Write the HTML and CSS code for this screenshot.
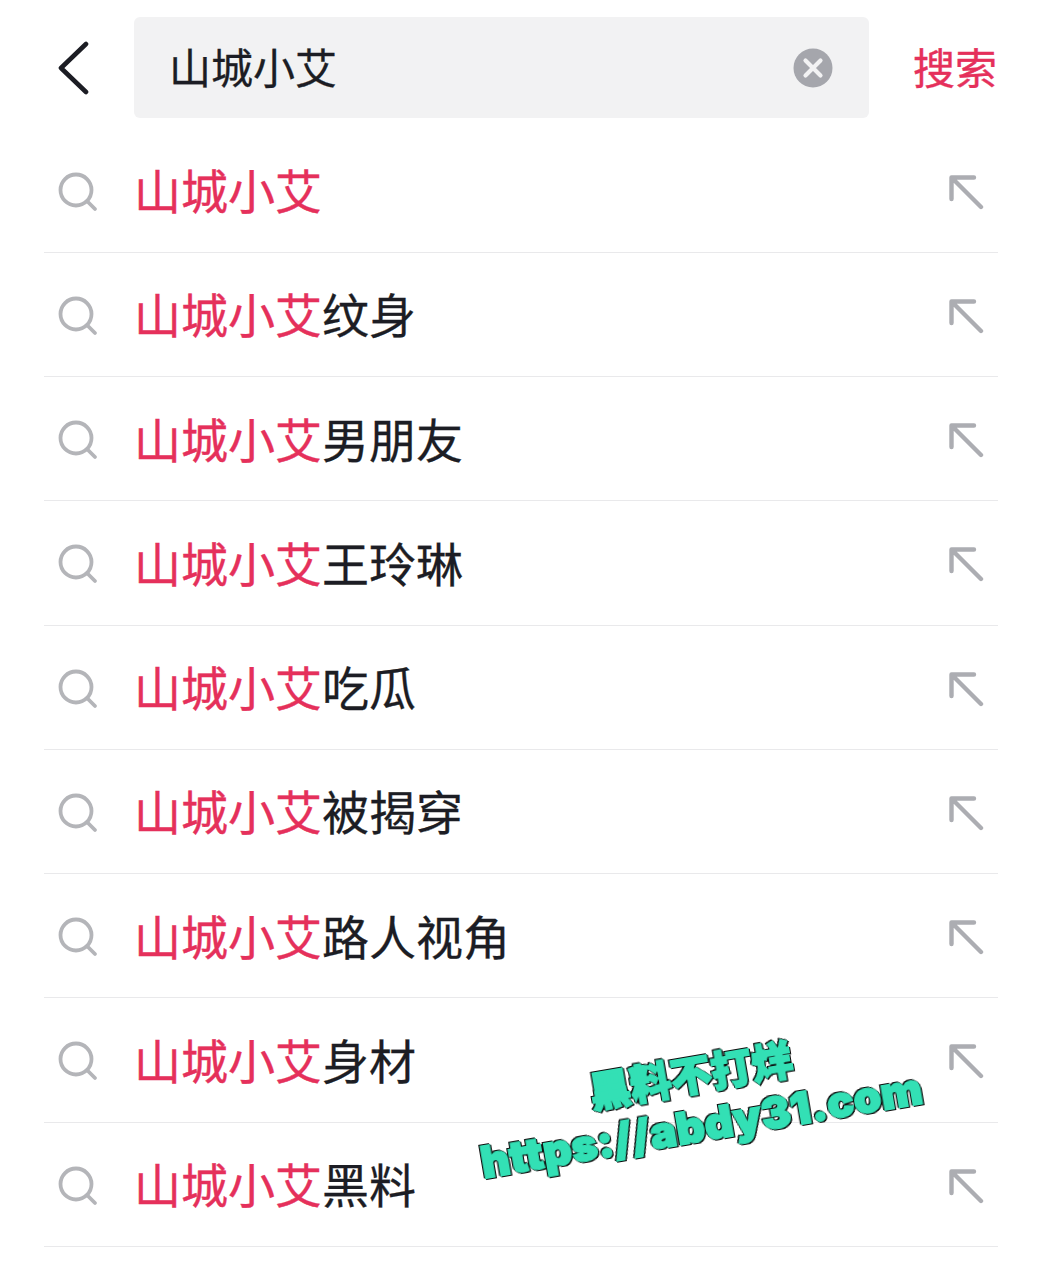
FILE: index.html
```html
<!doctype html>
<html lang="zh">
<head>
    <meta charset="utf-8">
    <title>搜索</title>
    <link rel="stylesheet" href="styles.css">
</head>
<body>
<svg class="icon-defs" width="0" height="0">
    <symbol id="icon-search" viewBox="0 0 40 40">
        <circle cx="18" cy="18" r="15.5" fill="none" stroke="#b4b5b9" stroke-width="3.8"/>
        <path d="M29.5 29.5L37 37" fill="none" stroke="#b4b5b9" stroke-width="3.8" stroke-linecap="round"/>
    </symbol>
    <symbol id="icon-fill" viewBox="0 0 36 36">
        <path d="M25 2.5H2.500V24M3 3L32 32" fill="none" stroke="#acadb2" stroke-width="4.400" stroke-linecap="round" stroke-linejoin="round"/>
    </symbol>
</svg>

<header class="topbar">
    <svg class="back" viewBox="0 0 32 54" width="32" height="54">
        <path d="M29 3L4 27L29 51" fill="none" stroke="#1c1d24" stroke-width="4.600" stroke-linecap="round" stroke-linejoin="round"/>
    </svg>
    <div class="searchbox">
        <span class="query">山城小艾</span>
        <svg class="clear" viewBox="0 0 40 40" width="40" height="40">
            <circle cx="20" cy="20" r="19.500" fill="#a5a6ac"/>
            <path d="M12.500 12.500L27.500 27.500M27.500 12.500L12.500 27.500" stroke="#f2f2f3" stroke-width="4.200" stroke-linecap="round"/>
        </svg>
    </div>
    <span class="submit">搜索</span>
</header>

<ul class="suggestions">
    <li class="row"><svg class="glass"><use href="#icon-search"/></svg><span class="label"><em>山城小艾</em></span><svg class="fill"><use href="#icon-fill"/></svg></li>
    <li class="row"><svg class="glass"><use href="#icon-search"/></svg><span class="label"><em>山城小艾</em>纹身</span><svg class="fill"><use href="#icon-fill"/></svg></li>
    <li class="row"><svg class="glass"><use href="#icon-search"/></svg><span class="label"><em>山城小艾</em>男朋友</span><svg class="fill"><use href="#icon-fill"/></svg></li>
    <li class="row"><svg class="glass"><use href="#icon-search"/></svg><span class="label"><em>山城小艾</em>王玲琳</span><svg class="fill"><use href="#icon-fill"/></svg></li>
    <li class="row"><svg class="glass"><use href="#icon-search"/></svg><span class="label"><em>山城小艾</em>吃瓜</span><svg class="fill"><use href="#icon-fill"/></svg></li>
    <li class="row"><svg class="glass"><use href="#icon-search"/></svg><span class="label"><em>山城小艾</em>被揭穿</span><svg class="fill"><use href="#icon-fill"/></svg></li>
    <li class="row"><svg class="glass"><use href="#icon-search"/></svg><span class="label"><em>山城小艾</em>路人视角</span><svg class="fill"><use href="#icon-fill"/></svg></li>
    <li class="row"><svg class="glass"><use href="#icon-search"/></svg><span class="label"><em>山城小艾</em>身材</span><svg class="fill"><use href="#icon-fill"/></svg></li>
    <li class="row"><svg class="glass"><use href="#icon-search"/></svg><span class="label"><em>山城小艾</em>黑料</span><svg class="fill"><use href="#icon-fill"/></svg></li>
</ul>

<div class="stamp">
    <div class="stamp-cn">黑料不打烊</div>
    <div class="stamp-url">https://abdy31.com</div>
</div>
</body>
</html>
```

FILE: styles.css
```css
html, body {
    margin: 0;
    padding: 0;
}

body {
    position: relative;
    width: 1043px;
    height: 1280px;
    overflow: hidden;
    background: #fff;
    font-family: "Noto Sans CJK SC", "Noto Sans", sans-serif;
    color: #1c1d24;
}

.icon-defs {
    position: absolute;
}

/* top bar */
.topbar {
    display: flex;
    align-items: center;
    height: 101px;
    padding: 17px 46px 10.500px 57px;
}

.back {
    flex: none;
    margin-right: 45px;
}

.searchbox {
    flex: none;
    display: flex;
    align-items: center;
    justify-content: space-between;
    box-sizing: border-box;
    width: 735px;
    height: 101px;
    padding: 0 36px 0 35px;
    background: #f2f2f3;
    border-radius: 6px;
}

.query {
    font-size: 42px;
    line-height: 60px;
    margin-top: -3px;
    -webkit-text-stroke: 0.3px #1c1d24;
}

.submit {
    margin-left: auto;
    font-size: 42px;
    line-height: 60px;
    margin-top: -3px;
    color: #e5305b;
    -webkit-text-stroke: 0.4px #e5305b;
}

/* suggestion rows */
.suggestions {
    list-style: none;
    margin: 0 45px 0 44px;
    padding: 0;
}

.row {
    display: flex;
    align-items: center;
    box-sizing: border-box;
    height: 124.250px;
    border-bottom: 1px solid #e9e9eb;
}

.glass {
    flex: none;
    width: 40px;
    height: 40px;
    margin-left: 14px;
    margin-top: 3px;
}

.label {
    flex: 1;
    margin-left: 36px;
    margin-top: -2px;
    font-size: 47px;
    line-height: 60px;
    -webkit-text-stroke: 0.3px #1c1d24;
}

.label em {
    font-style: normal;
    color: #e5305b;
    -webkit-text-stroke: 0.4px #e5305b;
}

.fill {
    flex: none;
    width: 36px;
    height: 36px;
    margin-right: 13px;
    margin-top: 5px;
}

/* watermark over the list */
.stamp {
    position: absolute;
    left: 470px;
    top: 1030px;
    width: 460px;
    height: 160px;
    font-weight: 900;
    color: #33e0b5;
    white-space: nowrap;
}

.stamp-cn,
.stamp-url {
    position: absolute;
    -webkit-text-stroke: 2px #33e0b5;
    filter: drop-shadow(0.5px 0.5px 0 #0b0b0b) drop-shadow(-0.5px -0.5px 0 #0b0b0b) drop-shadow(1.500px 1.500px 0 #0b0b0b);
    transform: rotate(-9.700deg);
}

.stamp-cn {
    left: 118px;
    top: 13px;
    font-family: "Noto Sans CJK SC", sans-serif;
    font-size: 41px;
    line-height: 60px;
}

.stamp-url {
    left: 8px;
    top: 63px;
    font-family: "Inter", sans-serif;
    font-size: 44px;
    line-height: 64px;
    letter-spacing: 0.3px;
}
```
